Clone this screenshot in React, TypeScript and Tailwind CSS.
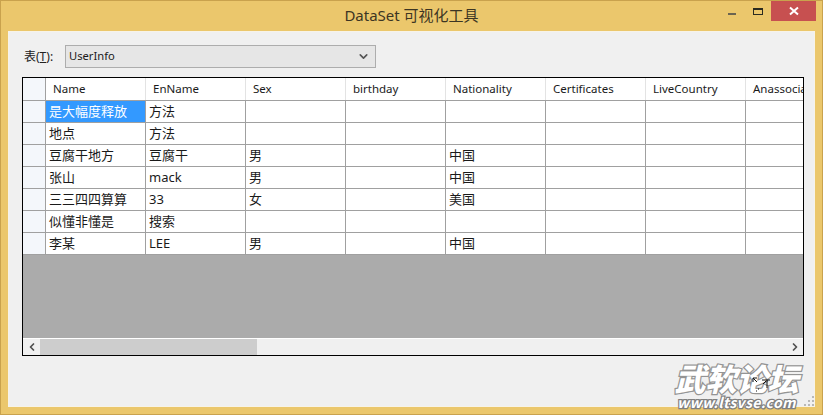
import { ChevronDown, ChevronLeft, ChevronRight } from "lucide-react";

const columns = ["Name", "EnName", "Sex", "birthday", "Nationality", "Certificates", "LiveCountry", "Anassociation"];

const rows = [
  ["是大幅度释放", "方法", "", "", ""],
  ["地点", "方法", "", "", ""],
  ["豆腐干地方", "豆腐干", "男", "", "中国"],
  ["张山", "mack", "男", "", "中国"],
  ["三三四四算算", "33", "女", "", "美国"],
  ["似懂非懂是", "搜索", "", "", ""],
  ["李某", "LEE", "男", "", "中国"],
];

export default function App() {
  return (
    <div className="relative flex h-[415px] w-[823px] flex-col overflow-hidden bg-[#ebc76c] font-['Noto_Sans','Noto_Sans_CJK_SC',sans-serif] text-[12px] text-[#1a1a1a] shadow-[inset_0_0_0_1px_#c9a24d]">
      {/* Title bar */}
      <div className="grid h-[31px] shrink-0 grid-cols-[1fr_auto_1fr] items-start">
        <div />
        <div className="pt-[5px] text-[15px] leading-[20px] text-[#3c3523]">DataSet 可视化工具</div>
        <div className="flex items-start justify-end pt-[1px] pr-[7px]">
          <div className="flex h-[20px] w-[27px] items-start justify-center pt-[12px]">
            <div className="h-[2px] w-[8px] bg-[#6b6450]" />
          </div>
          <div className="flex h-[20px] w-[26px] items-start justify-center pt-[7px]">
            <div className="h-[7px] w-[10px] border border-t-2 border-[#2b2b20]" />
          </div>
          <div className="flex h-[20px] w-[45px] items-center justify-center bg-[#c75050]">
            <svg width="10" height="10" viewBox="0 0 10 10" fill="none" stroke="#fff" strokeWidth="2">
              <path d="M1 1.5 9 8.5M9 1.5 1 8.5" />
            </svg>
          </div>
        </div>
      </div>

      {/* Client area */}
      <div className="mx-[8px] mb-[8px] flex min-h-0 flex-1 flex-col border border-[#f7f3e8] bg-[#f0f0f0] px-[13px] pt-[13px] pb-[50px]">
        <div className="flex h-[23px] shrink-0 items-center">
          <span className="w-[43px] pl-[2px] text-[12px] text-[#222]">
            表(<span className="underline">T</span>):
          </span>
          <div className="flex h-[23px] w-[311px] items-center justify-between border border-[#adadad] bg-[#e6e6e6] pr-[5px] pl-[3px]">
            <span className="text-[11.2px]">UserInfo</span>
            <ChevronDown size={13} strokeWidth={3} className="text-[#555]" />
          </div>
        </div>

        {/* Data grid */}
        <div className="mt-[9px] flex min-h-0 w-[782px] flex-1 flex-col overflow-hidden border border-black bg-[#ababab]">
          <div className="flex h-[23px] shrink-0 border-b border-[#a0a0a0] bg-white">
            <div className="w-[23px] shrink-0 border-r border-[#a0a0a0] bg-[#f4f7fb]" />
            {columns.map((c) => (
              <div key={c} className="w-[100px] shrink-0 border-r border-[#e3e3e3] pl-[7px] text-[11.5px] leading-[22px] whitespace-nowrap">
                {c}
              </div>
            ))}
          </div>
          {rows.map((row, i) => (
            <div key={i} className="flex h-[22px] shrink-0 border-b border-[#a0a0a0] bg-white last:border-b-0">
              <div className="w-[23px] shrink-0 border-r border-[#a0a0a0] bg-[#f4f7fb]" />
              {columns.map((c, j) => (
                <div
                  key={c}
                  className={`w-[100px] shrink-0 border-r border-[#a0a0a0] pl-[3px] text-[13px] leading-[20px] whitespace-nowrap ${
                    i === 0 && j === 0 ? "bg-[#3399ff] text-white" : ""
                  }`}
                >
                  {row[j] ?? ""}
                </div>
              ))}
            </div>
          ))}
          <div className="flex-1" />
          {/* Horizontal scrollbar */}
          <div className="flex h-[17px] shrink-0 items-center border-t border-white bg-[#f0f0f0]">
            <div className="flex w-[17px] justify-center">
              <ChevronLeft size={12} strokeWidth={3.5} className="text-[#505050]" />
            </div>
            <div className="h-full w-[217px] bg-[#cdcdcd]" />
            <div className="flex-1" />
            <div className="flex w-[17px] justify-center">
              <ChevronRight size={12} strokeWidth={3.5} className="text-[#505050]" />
            </div>
          </div>
        </div>
      </div>

      {/* Resize grip */}
      <svg className="absolute top-[396px] left-[804px]" width="11" height="11" viewBox="0 0 11 11" fill="#b8b8b8">
        <rect x="8" y="0" width="2" height="2" />
        <rect x="4" y="4" width="2" height="2" />
        <rect x="8" y="4" width="2" height="2" />
        <rect x="0" y="8" width="2" height="2" />
        <rect x="4" y="8" width="2" height="2" />
        <rect x="8" y="8" width="2" height="2" />
      </svg>

      {/* Forum watermark over the corner */}
      <div className="absolute top-[360px] left-[673px] flex w-[127px] flex-col items-center font-['Noto_Sans_CJK_SC','Noto_Sans',sans-serif] text-white">
        <div className="text-[31px] leading-[36px] font-black whitespace-nowrap italic [paint-order:stroke_fill] [-webkit-text-stroke:2.5px_#949494]">武软论坛</div>
        <div className="text-[14px] leading-[13px] font-bold tracking-[0.4px] whitespace-nowrap italic [paint-order:stroke_fill] [-webkit-text-stroke:2.5px_#808080]">www.ltsvse.com</div>
      </div>

      {/* Resize cursor caught in the shot */}
      <svg className="absolute top-[375px] left-[752px]" width="18" height="18" viewBox="0 0 18 18" fill="none" stroke="#111" strokeWidth="1">
        <path d="M1 3h4M1 3v4M1 3l4 4M10 5h8M15 5v8M14 6l-3 3" />
        <path d="M6 14h1M4 16h1" />
      </svg>
    </div>
  );
}
